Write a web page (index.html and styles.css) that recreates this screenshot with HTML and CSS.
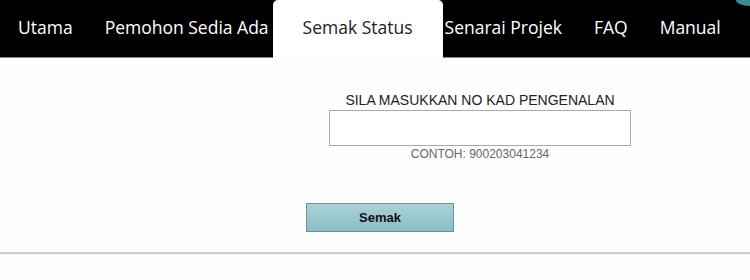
FILE: index.html
```html
<!DOCTYPE html>
<html>
<head>
<meta charset="utf-8">
<link rel="stylesheet" href="styles.css">
</head>
<body>
<div class="nav">
  <a class="tab">Utama</a>
  <a class="tab">Pemohon Sedia Ada</a>
  <a class="tab active">Semak Status</a>
  <a class="tab">Senarai Projek</a>
  <a class="tab">FAQ</a>
  <a class="tab">Manual</a>
  <span class="corner"></span>
</div>
<div class="content">
  <div class="field">
    <div class="label">SILA MASUKKAN NO KAD PENGENALAN</div>
    <input class="ic" type="text">
    <div class="hint">CONTOH: 900203041234</div>
  </div>
  <div class="actions">
    <button class="btn">Semak</button>
  </div>
</div>
<div class="rule"></div>
</body>
</html>
```
FILE: styles.css
```css
html, body {
  margin: 0;
  padding: 0;
  background: #fefefe;
  font-family: "Liberation Sans", Arial, sans-serif;
}
.nav {
  position: relative;
  display: flex;
  align-items: stretch;
  height: 57px;
  background: #000;
  border-bottom: 1px solid #888;
  padding-left: 2px;
}
.tab {
  display: flex;
  align-items: center;
  padding: 0 16px 3px;
  color: #fff;
  font-family: "Open Sans", sans-serif;
  font-size: 17.5px;
  white-space: nowrap;
}
.tab.active {
  background: #fff;
  color: #222;
  padding: 0 30px 4px 30px;
  margin: 0 -14px -1px -12px;
  border-radius: 5px 5px 0 0;
  position: relative;
  z-index: 1;
}
.corner {
  position: absolute;
  right: 0;
  top: 0;
  width: 14px;
  height: 6px;
  border-bottom-left-radius: 14px 6px;
  background: #3b8c96;
}
.content {
  display: flex;
  flex-direction: column;
  padding-top: 34px;
  height: 194px;
  box-sizing: border-box;
}
.field {
  display: flex;
  flex-direction: column;
  align-items: center;
  width: 302px;
  margin-left: 329px;
}
.label {
  font-size: 14px;
  color: #222;
  line-height: 17px;
}
.ic {
  width: 302px;
  height: 36px;
  box-sizing: border-box;
  border: 1px solid #aaa;
  margin: 1px 0 0;
  background: #fff;
}
.hint {
  font-size: 12px;
  color: #666;
  margin-top: 1px;
  line-height: 14px;
}
.actions {
  margin-top: 42px;
  padding-left: 306px;
}
.btn {
  width: 148px;
  height: 29px;
  border: 1px solid #5d9ba3;
  background: linear-gradient(#a9d2d6, #8cbfc5);
  font-family: "Liberation Sans", Arial, sans-serif;
  font-weight: bold;
  font-size: 13px;
  color: #111;
  padding: 0;
}
.rule {
  height: 2px;
  background: #d0d0d0;
  border-bottom: 1px solid #eee;
}
```
